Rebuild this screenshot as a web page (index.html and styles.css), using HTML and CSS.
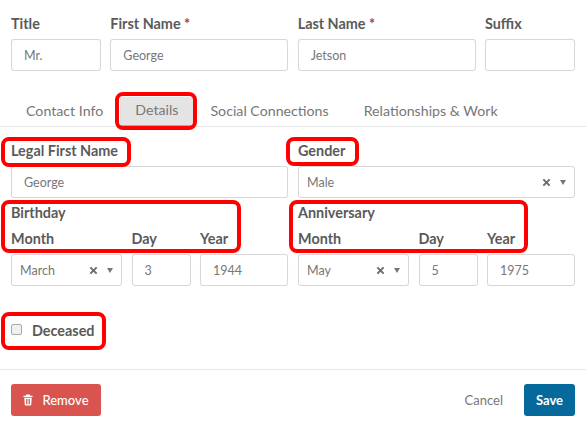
FILE: index.html
```html
<!DOCTYPE html>
<html lang="en">
<head>
<meta charset="utf-8">
<title>Person details</title>
<link rel="stylesheet" href="styles.css">
</head>
<body>
<main class="page">
  <section class="name-row">
    <div class="field"><label class="label">Title</label><input class="input" value="Mr."></div>
    <div class="field"><label class="label">First Name <span class="req">*</span></label><input class="input" value="George"></div>
    <div class="field"><label class="label">Last Name <span class="req">*</span></label><input class="input" value="Jetson"></div>
    <div class="field"><label class="label">Suffix</label><input class="input" value=""></div>
  </section>

  <nav class="tabs">
    <span class="tab">Contact Info</span>
    <span class="tab active">Details</span>
    <span class="tab">Social Connections</span>
    <span class="tab">Relationships &amp; Work</span>
  </nav>

  <section class="two-col legal-row">
    <div class="field"><label class="label">Legal First Name</label><input class="input" value="George"></div>
    <div class="field"><label class="label">Gender</label>
      <div class="select"><span class="select-value">Male</span>
        <svg class="clear" viewBox="0 0 10 10"><path d="M1.500 1.500l7 7M8.500 1.500l-7 7"/></svg><span class="caret"></span></div>
    </div>
  </section>

  <section class="two-col dates">
    <div class="date-group">
      <div class="label group-title">Birthday</div>
      <div class="date-row">
        <div class="field"><label class="label">Month</label>
          <div class="select"><span class="select-value">March</span>
            <svg class="clear" viewBox="0 0 10 10"><path d="M1.500 1.500l7 7M8.500 1.500l-7 7"/></svg><span class="caret"></span></div>
        </div>
        <div class="field"><label class="label">Day</label><input class="input" value="3"></div>
        <div class="field"><label class="label">Year</label><input class="input" value="1944"></div>
      </div>
    </div>
    <div class="date-group">
      <div class="label group-title">Anniversary</div>
      <div class="date-row">
        <div class="field"><label class="label">Month</label>
          <div class="select"><span class="select-value">May</span>
            <svg class="clear" viewBox="0 0 10 10"><path d="M1.500 1.500l7 7M8.500 1.500l-7 7"/></svg><span class="caret"></span></div>
        </div>
        <div class="field"><label class="label">Day</label><input class="input" value="5"></div>
        <div class="field"><label class="label">Year</label><input class="input" value="1975"></div>
      </div>
    </div>
  </section>

  <label class="deceased"><span class="check"></span><span class="label">Deceased</span></label>

  <footer class="footer">
    <button class="btn remove">
      <svg class="trash" viewBox="0 0 12 14"><path d="M4 0.500h4l.8 1.500H11.500v1.500H.5V2h2.700zM1.500 4.300h9l-.6 8.500a1 1 0 0 1-1 .9H3.100a1 1 0 0 1-1-.9zM3.800 5.800v6.200h1V5.800zM5.500 5.800v6.200h1V5.800zM7.200 5.800v6.200h1V5.800z" fill-rule="evenodd"/></svg>
      Remove</button>
    <div class="actions">
      <span class="cancel">Cancel</span>
      <button class="btn save">Save</button>
    </div>
  </footer>

  <div class="mark mark-details"></div>
  <div class="mark mark-legal"></div>
  <div class="mark mark-gender"></div>
  <div class="mark mark-birthday"></div>
  <div class="mark mark-anniversary"></div>
  <div class="mark mark-deceased"></div>
</main>
</body>
</html>
```
FILE: styles.css
```css
* { box-sizing: border-box; }
html, body { margin: 0; padding: 0; background: #fff; }
body { font-family: "Lato", "Open Sans", sans-serif; color: #777; overflow: hidden; }
.page { position: relative; width: 586px; height: 430px; padding: 15px 11px 0 11px; }

.label { display: block; font-size: 14.400px; line-height: 18px; font-weight: 700; color: #5a5a5a; white-space: nowrap; }
.req { color: #a94442; }
.field { display: flex; flex-direction: column; gap: 6px; min-width: 0; }

.input, .select {
  width: 100%; height: 32px; border: 1px solid #d8d8d8; border-radius: 3px; background: #fff;
  font-family: inherit; font-size: 12.500px; color: #777; box-shadow: 0 0 1px rgba(0,0,0,.08);
}
.input { padding: 0 12px; outline: none; }

.name-row { display: grid; grid-template-columns: 90px 178px 178px 90px; column-gap: 9.330px; }

.tabs { display: flex; gap: 1px; height: 30px; margin: 26px -11px 0 -11px; padding-left: 10px; border-bottom: 1px solid #e6e6e6; align-items: stretch; }
.tab { display: flex; align-items: center; padding: 0 16px 3px; font-size: 14.200px; color: #777; white-space: nowrap; }
.tab.active { background: #e4e4e4; border-bottom: 1px solid #e8a33d; padding: 0 15px 3px; }
.tab:last-child { margin-left: 2px; }

.two-col { display: grid; grid-template-columns: 277px 277px; column-gap: 10px; }
.legal-row { margin-top: 15px; }
.dates { margin-top: 6px; }
.group-title { margin-bottom: 8px; }

.date-row { display: grid; grid-template-columns: 111px 59px 88px; column-gap: 9.500px; }

.select { display: flex; align-items: center; padding: 0 8px 0 8px; gap: 9px; }
.select-value { flex: 1; }
.clear { width: 9px; height: 9px; stroke: #6d6d6d; stroke-width: 2.200; fill: none; }
.caret { width: 0; height: 0; border-left: 3.500px solid transparent; border-right: 3.500px solid transparent; border-top: 5px solid #777; }

.deceased { display: flex; align-items: center; gap: 10px; margin-top: 36px; height: 18px; }
.check { width: 11px; height: 11px; border: 1px solid #aaa; border-radius: 2px; background: #f0f0f0; margin-top: -3px; }

.footer { display: flex; justify-content: space-between; align-items: center; margin: 29px -11px 0 -11px; padding: 14px 11px 0 11px; border-top: 1px solid #e8e8e8; }
.btn { height: 32px; border: 0; border-radius: 3px; font-family: inherit; font-size: 13px; font-weight: 600; color: #fff; padding: 0; display: flex; align-items: center; justify-content: center; }
.remove { width: 90px; background: #d9534f; gap: 9px; font-weight: 500; }
.trash { width: 10px; height: 12px; fill: #fff; }
.actions { display: flex; align-items: center; gap: 21px; }
.cancel { font-size: 13px; color: #777; }
.save { width: 51px; background: #06699c; font-weight: 700; }

.mark { position: absolute; border: 4.500px solid #f00; border-radius: 8px; pointer-events: none; }
.mark-details { left: 115px; top: 92px; width: 82px; height: 38px; }
.mark-legal { left: 1px; top: 137px; width: 130px; height: 30px; }
.mark-gender { left: 286px; top: 137px; width: 73px; height: 29px; }
.mark-birthday { left: 1px; top: 200px; width: 240px; height: 53px; }
.mark-anniversary { left: 289px; top: 200px; width: 239px; height: 53px; }
.mark-deceased { left: 1px; top: 312px; width: 105px; height: 38px; }
```
